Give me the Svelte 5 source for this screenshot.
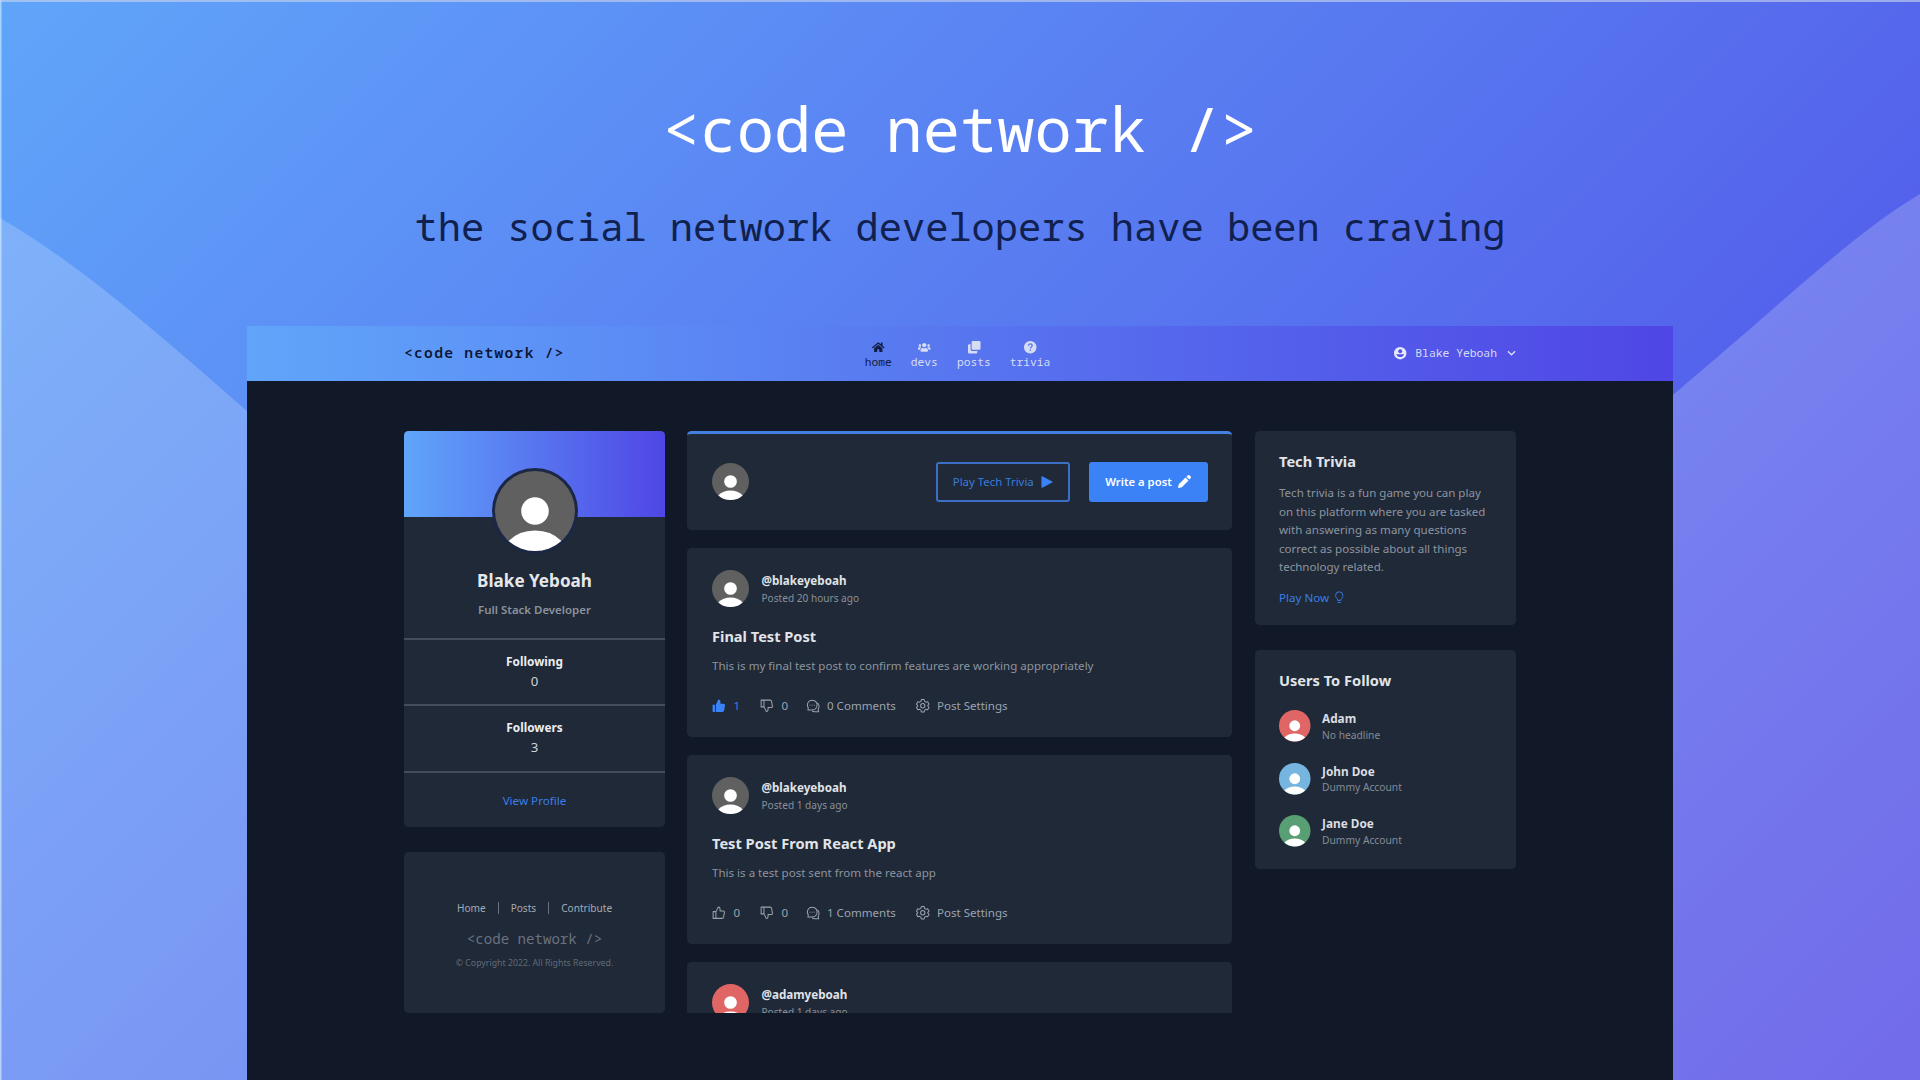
<script>
  const navItems = [
    { id: 'home', label: 'home', active: true },
    { id: 'users', label: 'devs' },
    { id: 'posts', label: 'posts' },
    { id: 'question', label: 'trivia' },
  ];
  const posts = [
    { user: '@blakeyeboah', when: 'Posted 20 hours ago', title: 'Final Test Post', body: 'This is my final test post to confirm features are working appropriately', likes: 1, liked: true, comments: 0, tone: 'gray' },
    { user: '@blakeyeboah', when: 'Posted 1 days ago', title: 'Test Post From React App', body: 'This is a test post sent from the react app', likes: 0, liked: false, comments: 1, tone: 'gray' },
    { user: '@adamyeboah', when: 'Posted 1 days ago', tone: 'red' },
  ];
  const suggestions = [
    { name: 'Adam', headline: 'No headline', tone: 'red' },
    { name: 'John Doe', headline: 'Dummy Account', tone: 'blue' },
    { name: 'Jane Doe', headline: 'Dummy Account', tone: 'green' },
  ];
  const stats = [
    { label: 'Following', value: 0 },
    { label: 'Followers', value: 3 },
  ];
</script>

{#snippet avatar(tone, size)}
  <svg class="avatar {tone} {size}" viewBox="0 0 100 100">
    <circle class="disc" cx="50" cy="50" r="50" />
    <circle cx="50" cy="50" r="17.2" fill="#fff" />
    <path d="M17 87.500Q30 74.500 50 74.500T83 87.500A50 50 0 0 1 17 87.500Z" fill="#fff" />
  </svg>
{/snippet}

{#snippet icon(id)}
  {#if id === 'home'}
    <svg class="nav-icon" viewBox="0 0 576 512" fill="currentColor"><path d="M280.370 148.260L96 300.110V464a16 16 0 0 0 16 16l112.060-.29a16 16 0 0 0 15.920-16V368a16 16 0 0 1 16-16h64a16 16 0 0 1 16 16v95.640a16 16 0 0 0 16 16.050L464 480a16 16 0 0 0 16-16V300L295.670 148.260a12.190 12.190 0 0 0-15.300 0zM571.600 251.470L488 182.560V44.050a12 12 0 0 0-12-12h-56a12 12 0 0 0-12 12v72.610L318.470 43a48 48 0 0 0-61 0L4.340 251.470a12 12 0 0 0-1.600 16.900l25.500 31A12 12 0 0 0 45.150 301l235.220-193.740a12.190 12.190 0 0 1 15.300 0L530.900 301a12 12 0 0 0 16.900-1.600l25.500-31a12 12 0 0 0-1.700-16.930z" /></svg>
  {:else if id === 'users'}
    <svg class="nav-icon" viewBox="0 0 640 512" fill="currentColor"><path d="M96 224c35.300 0 64-28.700 64-64s-28.700-64-64-64-64 28.700-64 64 28.700 64 64 64zm448 0c35.300 0 64-28.700 64-64s-28.700-64-64-64-64 28.700-64 64 28.700 64 64 64zm32 32h-64c-17.600 0-33.500 7.100-45.100 18.600 40.300 22.100 68.900 62 75.100 109.400h66c17.700 0 32-14.300 32-32v-32c0-35.300-28.700-64-64-64zm-256 0c61.900 0 112-50.100 112-112S381.900 32 320 32 208 82.100 208 144s50.100 112 112 112zm76.800 32h-8.300c-20.800 10-43.900 16-68.500 16s-47.600-6-68.500-16h-8.300C179.600 288 128 339.600 128 403.200V432c0 26.500 21.500 48 48 48h288c26.500 0 48-21.500 48-48v-28.800c0-63.600-51.600-115.200-115.200-115.200zm-223.700-13.400C161.500 263.100 145.600 256 128 256H64c-35.300 0-64 28.700-64 64v32c0 17.700 14.300 32 32 32h65.900c6.300-47.400 34.900-87.300 75.200-109.400z" /></svg>
  {:else if id === 'posts'}
    <svg class="nav-icon" viewBox="0 0 24 24" fill="currentColor"><rect x="7" y="0" width="17" height="17" rx="2.500" /><path d="M2.500 6H5v10.500A2.500 2.500 0 0 0 7.500 19H18v2.500a2.500 2.500 0 0 1-2.500 2.500h-13A2.500 2.500 0 0 1 0 21.500v-13A2.500 2.500 0 0 1 2.500 6z" /></svg>
  {:else if id === 'question'}
    <svg class="nav-icon" viewBox="0 0 24 24"><circle cx="12" cy="12" r="12" fill="currentColor" /><path d="M8.300 9.200C8.500 6.700 10 5.500 12.100 5.500c2.200 0 3.700 1.300 3.700 3.200 0 2.800-3.500 2.900-3.500 5.500" fill="none" stroke="#5570ee" stroke-width="2.400" /><circle cx="12.200" cy="17.800" r="1.600" fill="#5570ee" /></svg>
  {:else if id === 'like'}
    <svg class="act-icon" viewBox="0 0 24 24"><path d="M2 10h5v12H2zM7 10.500L11 2c2 0 3.300 1 3.300 3v4H20c1.500 0 2.400 1 2.100 2.500l-1.600 8.500c-.2 1.200-1 2-2.300 2H7z" /></svg>
  {:else if id === 'liked'}
    <svg class="act-icon solid" viewBox="0 0 24 24"><path d="M1 10h4.600v13H2.200C1.500 23 1 22.500 1 21.800zM7 10l4-9c2.600 0 4 1.500 4 3.800V8.500h5.500c1.800 0 2.900 1.300 2.600 3l-1.600 9c-.3 1.500-1.200 2.500-2.800 2.500H7z" /></svg>
  {:else if id === 'dislike'}
    <svg class="act-icon" viewBox="0 0 24 24"><path d="M2 2h5v12H2zM7 13.500l4 8.500c2 0 3.300-1 3.300-3v-4H20c1.500 0 2.400-1 2.100-2.500L20.500 4c-.2-1.200-1-2-2.300-2H7z" /></svg>
  {:else if id === 'comments'}
    <svg class="act-icon" viewBox="0 0 24 24"><path d="M3.500 19.500H11a8.700 8.700 0 1 0-7-3.700zM20.500 7c1.700 1.500 2.700 3.700 2.700 6 0 2-.6 3.700-1.700 5.200l1 4.300H15c-1.500 0-2.800-.4-4-1.200" /><path class="dots" d="M6.300 11h1.700M10 11h1.700M13.700 11h1.700" /></svg>
  {:else if id === 'settings'}
    <svg class="act-icon" viewBox="0 0 24 24"><path d="M9.500 1h5l.8 3.300 2.200 1.300 3.200-.9 2.400 4.300-2.400 3 2.400 3-2.400 4.300-3.200-.9-2.200 1.300-.8 3.300h-5l-.8-3.300-2.200-1.300-3.200.9L.9 15l2.400-3L.9 9l2.400-4.300 3.200.9 2.200-1.300z" /><circle cx="12" cy="12" r="3.800" /></svg>
  {/if}
{/snippet}

<main class="stage">
  <svg class="backdrop" viewBox="0 0 1920 1080" preserveAspectRatio="none">
    <path d="M0 218C75 261 150 326 247 411L330 486V1080H0ZM1920 194C1850 236 1785 301 1674 394L1600 456V1080H1920Z" />
  </svg>

  <header class="hero">
    <h1>&lt;code network /&gt;</h1>
    <p>the social network developers have been craving</p>
  </header>

  <section class="window">
    <nav>
      <div class="brand">&lt;code network /&gt;</div>
      <ul>
        {#each navItems as item}
          <li class:active={item.active}>
            {@render icon(item.id)}
            <span>{item.label}</span>
          </li>
        {/each}
      </ul>
      <div class="account">
        <svg class="user-icon" viewBox="0 0 24 24"><circle cx="12" cy="12" r="12" fill="currentColor" /><circle cx="12" cy="8.300" r="3.800" fill="#5153e8" /><path d="M4.500 14h15c-1 3.600-3.900 5.500-7.500 5.500S5.500 17.600 4.500 14z" fill="#5153e8" /></svg>
        <span>Blake Yeboah</span>
        <svg class="chevron" viewBox="0 0 10 6"><path d="M1 1l4 4 4-4" /></svg>
      </div>
    </nav>

    <div class="columns">
      <aside class="side">
        <div class="card profile">
          <div class="cover"></div>
          <div class="portrait">{@render avatar('gray', 'fill')}</div>
          <h2>Blake Yeboah</h2>
          <p class="role">Full Stack Developer</p>
          {#each stats as s}
            <div class="stat">
              <strong>{s.label}</strong>
              <span>{s.value}</span>
            </div>
          {/each}
          <div class="view"><a href="#profile">View Profile</a></div>
        </div>
        <footer class="card foot">
          <div class="links"><span>Home</span><i></i><span>Posts</span><i></i><span>Contribute</span></div>
          <div class="foot-brand">&lt;code network /&gt;</div>
          <small>© Copyright 2022. All Rights Reserved.</small>
        </footer>
      </aside>

      <div class="feed">
        <div class="card composer">
          {@render avatar('gray', 'md')}
          <button class="outline">Play Tech Trivia
            <svg class="play" viewBox="0 0 12 12"><path d="M1 .8v10.400L11 6z" fill="currentColor" stroke="currentColor" stroke-width="1.200" stroke-linejoin="round" /></svg>
          </button>
          <button class="primary">Write a post
            <svg class="pencil" viewBox="0 0 24 24" fill="currentColor"><path d="M14 4.500l5.500 5.500L7 22.500l-5.600 1.300c-.7.100-1.300-.5-1.200-1.200L1.500 17zM15.500 3L18 .8c1-1 2.500-1 3.500 0l1.700 1.700c1 1 1 2.500 0 3.500L21 8.500z" /></svg>
          </button>
        </div>
        {#each posts as p}
          <article class="card post">
            <div class="author">
              {@render avatar(p.tone, 'md')}
              <div>
                <strong>{p.user}</strong>
                <span>{p.when}</span>
              </div>
            </div>
            {#if p.title}
              <h3>{p.title}</h3>
              <p>{p.body}</p>
              <div class="actions">
                <span class="like" class:liked={p.liked}>{@render icon(p.liked ? 'liked' : 'like')}{p.likes}</span>
                <span class="dislike">{@render icon('dislike')}0</span>
                <span class="comments">{@render icon('comments')}{p.comments} Comments</span>
                <span>{@render icon('settings')}Post Settings</span>
              </div>
            {/if}
          </article>
        {/each}
      </div>

      <aside class="side right">
        <div class="card trivia">
          <h3>Tech Trivia</h3>
          <p>Tech trivia is a fun game you can play<br />on this platform where you are tasked<br />with answering as many questions<br />correct as possible about all things<br />technology related.</p>
          <a href="#play">Play Now
            <svg class="bulb" viewBox="0 0 16 24"><path d="M4.800 18v-2.500C2.500 14 1 11.500 1 8.500a7 7 0 0 1 14 0c0 3-1.500 5.500-3.800 7V18zM5 22h6" /></svg>
          </a>
        </div>
        <div class="card follow">
          <h3>Users To Follow</h3>
          {#each suggestions as u}
            <div class="person">
              {@render avatar(u.tone, 'sm')}
              <div>
                <strong>{u.name}</strong>
                <span>{u.headline}</span>
              </div>
            </div>
          {/each}
        </div>
      </aside>
    </div>
  </section>
</main>

<style>
  :global(body) { margin: 0; overflow: hidden; background: #5a7ff2; }
  * { box-sizing: border-box; }
  h1, h2, h3, p, ul { margin: 0; padding: 0; font-weight: 400; }
  a { color: #3b7ee6; text-decoration: none; }
  svg { display: block; flex: none; overflow: visible; }

  .stage {
    position: relative;
    width: 1920px;
    height: 1080px;
    overflow: hidden;
    background: linear-gradient(135deg, #60a5fa, #4f46e5);
    box-shadow: inset 0 2px 0 rgba(200, 212, 236, .62), inset 1.500px 0 0 rgba(215, 245, 255, .6);
    font-family: "Noto Sans", "Open Sans", sans-serif;
    color: #9ca3af;
  }
  .backdrop { position: absolute; inset: 0; width: 1920px; height: 1080px; }
  .backdrop path { fill: rgba(255, 255, 255, .2); }

  .hero {
    position: relative;
    height: 326px;
    padding-top: 84px;
    text-align: center;
    font-family: "Noto Sans Mono", "DejaVu Sans Mono", monospace;
    white-space: nowrap;
  }
  .hero h1 { font-size: 62px; line-height: 88px; color: #fff; }
  .hero p { font-size: 38.700px; line-height: 50px; margin-top: 29px; color: #10204f; }

  .window {
    position: relative;
    width: 1426px;
    height: 754px;
    margin-left: 247px;
    background: #111827;
  }
  nav {
    height: 55px;
    display: grid;
    grid-template-columns: 1fr auto 1fr;
    align-items: center;
    padding: 0 157px;
    background: linear-gradient(90deg, #60a5fa, #4f46e5);
    font-family: "Noto Sans Mono", "DejaVu Sans Mono", monospace;
    color: #d7dcf5;
    white-space: nowrap;
  }
  .brand { font-size: 14.600px; font-weight: 600; letter-spacing: 1.300px; color: #0c1530; line-height: 20px; margin-top: -4px; }
  nav ul { display: flex; gap: 19px; list-style: none; margin-right: 5px; padding-top: 3px; }
  nav li { display: flex; flex-direction: column; align-items: center; font-size: 11.250px; line-height: 15px; }
  nav li.active { color: #111d42; }
  .nav-icon { width: 12.500px; height: 12.500px; margin-bottom: 1px; }
  .account { justify-self: end; display: flex; align-items: center; font-size: 11.350px; line-height: 16px; margin-top: -1px; }
  .user-icon { width: 12.400px; height: 12.400px; margin-right: 9px; color: #e6e9fb; }
  .chevron { width: 9px; height: 6px; margin-left: 10px; fill: none; stroke: currentColor; stroke-width: 1.500; }

  .columns {
    display: grid;
    grid-template-columns: 261px 545px 262px;
    column-gap: 22px;
    height: 632px;
    padding: 50px 0 0 157px;
  }
  .side, .feed { height: 582px; overflow: hidden; display: flex; flex-direction: column; }
  .side { gap: 25px; }
  .side.right { margin-left: 1px; }
  .feed { gap: 18.500px; }
  .card { flex: none; background: #1f2937; border-radius: 4.500px; overflow: hidden; }

  .avatar .disc { fill: #606060; }
  .avatar.red .disc { fill: #e06666; }
  .avatar.blue .disc { fill: #76b5df; }
  .avatar.green .disc { fill: #589f73; }
  .avatar.fill { width: 100%; height: 100%; }
  .avatar.md { width: 37px; height: 37px; }
  .avatar.sm { width: 31.500px; height: 31.500px; }

  .profile { height: 396px; display: flex; flex-direction: column; align-items: center; }
  .cover { align-self: stretch; flex: none; height: 86px; background: linear-gradient(90deg, #60a5fa, #4f46e5); }
  .portrait { flex: none; width: 86px; height: 86px; margin-top: -49px; padding: 3px; border-radius: 50%; background: #1b2745; }
  .profile h2 { font-size: 17.100px; font-weight: 700; line-height: 24px; margin-top: 15px; color: #e5e7eb; }
  .role { font-size: 11.450px; font-weight: 600; line-height: 18px; margin: 8px 0 19px; color: #8b929e; }
  .stat {
    flex: none;
    align-self: stretch;
    height: 66.300px;
    padding-top: 11.500px;
    border-top: 2px solid #454d5b;
    display: flex;
    flex-direction: column;
    align-items: center;
    gap: 2.500px;
    line-height: 18px;
  }
  .stat strong { font-size: 11.800px; color: #eceef2; }
  .stat span { font-size: 13.200px; color: #d1d5db; }
  .view { flex: 1; align-self: stretch; border-top: 2px solid #454d5b; display: grid; place-items: center; font-size: 11.650px; padding-top: 1px; }

  .foot { height: 161px; display: flex; flex-direction: column; align-items: center; padding-top: 46.500px; }
  .links { display: flex; align-items: center; font-size: 10.100px; line-height: 18px; color: #a4abb6; }
  .links i { width: 1px; height: 12px; margin: 0 12px; background: #6b7280; }
  .foot-brand { font-family: "Noto Sans Mono", "DejaVu Sans Mono", monospace; font-size: 14.100px; line-height: 20px; margin-top: 12.500px; color: #6b7280; }
  .foot small { font-size: 8.750px; line-height: 14px; margin-top: 6.500px; color: #626a78; }

  .composer {
    height: 98.500px;
    display: flex;
    align-items: center;
    padding: 0 24.500px 0 25px;
    border-top: 3px solid #4380e0;
  }
  .composer .avatar { margin-right: auto; }
  button {
    height: 40px;
    display: flex;
    align-items: center;
    justify-content: center;
    font: 11.400px "Noto Sans", "Open Sans", sans-serif;
    border-radius: 3px;
    padding: 0;
  }
  .outline { width: 134.500px; border: 2px solid #3b70c6; background: none; color: #3b7bdd; margin-right: 18.500px; gap: 7px; }
  .primary { width: 119px; border: 0; background: #3b82f6; color: #fff; font-weight: 600; font-size: 11.300px; gap: 6px; }
  .play { width: 12px; height: 12px; color: #3b82f6; }
  .pencil { width: 13px; height: 13px; }

  .post { height: 188.500px; padding: 21.500px 24.500px 0 25px; white-space: nowrap; }
  .author { display: flex; align-items: center; gap: 12.500px; }
  .author div, .person div { display: flex; flex-direction: column; }
  .author div { padding-top: 2px; }
  .author strong { font-size: 11.650px; line-height: 16px; color: #e0e3e8; }
  .author span { font-size: 10.100px; line-height: 16px; margin-top: 1px; color: #8a919d; }
  h3 { font-size: 14.600px; font-weight: 700; line-height: 20px; color: #e1e4e9; }
  .post h3 { margin-top: 19.500px; }
  .post p { font-size: 11.570px; line-height: 18px; margin-top: 10.500px; color: #8d94a0; }
  .actions { display: flex; margin-top: 21.500px; font-size: 11.550px; line-height: 20px; }
  .actions span { display: flex; align-items: center; gap: 8px; }
  .actions .like { width: 48px; }
  .actions .dislike { width: 45.500px; }
  .actions .comments { width: 110px; }
  .actions .liked { color: #3b7ee6; }
  .act-icon { width: 13.500px; height: 13.500px; fill: none; stroke: currentColor; stroke-width: 1.800; stroke-linejoin: round; }
  .act-icon.solid { fill: #3b82f6; stroke: none; }
  .dots { stroke-width: 1.600; }

  .right .card { padding-left: 24px; }
  .trivia { height: 194px; padding-top: 19.500px; }
  .trivia p { font-size: 11.550px; line-height: 18.500px; margin-top: 13.500px; color: #8d94a0; white-space: nowrap; }
  .trivia a { display: flex; align-items: center; gap: 6px; font-size: 11.600px; line-height: 18px; margin-top: 12px; }
  .bulb { width: 8.500px; height: 12.500px; fill: none; stroke: currentColor; stroke-width: 1.800; }
  .follow { height: 219px; padding-top: 19.500px; }
  .person { display: flex; align-items: center; gap: 11.500px; height: 31.500px; margin-top: 21.100px; }
  .follow h3 + .person { margin-top: 20.500px; }
  .person div { padding-top: 1px; }
  .person strong { font-size: 11.800px; line-height: 16px; color: #d9dce2; }
  .person span { font-size: 10.250px; line-height: 16px; margin-top: .5px; color: #858c98; }
</style>
